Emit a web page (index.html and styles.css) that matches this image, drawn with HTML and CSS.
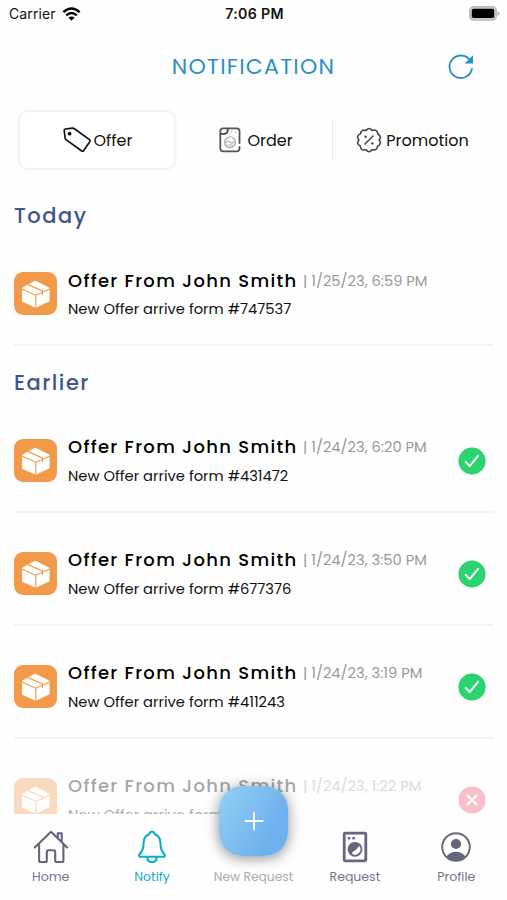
FILE: index.html
```html
<!DOCTYPE html>
<html lang="en">
<head>
    <meta charset="UTF-8">
    <meta name="viewport" content="width=device-width, initial-scale=1.0">
    <title>Notification</title>
    <link rel="stylesheet" href="styles.css">
</head>
<body>
    <!-- Shared icons -->
    <svg class="icon-defs" width="0" height="0">
        <symbol id="box" viewBox="0 0 43 43">
            <path d="M21.2 9 L35.2 16 V29 L21.8 35.4 L8.4 29.4 V16 Z" fill="#fff" stroke="#fff" stroke-width="0.8" stroke-linejoin="round"/>
            <path d="M7.8 17 L21.8 23.2 L36 17 M21.8 23.2 V36 M14 12.6 L28.4 19 V23" fill="none" stroke="#f39a4a" stroke-width="1.2"/>
        </symbol>
        <symbol id="check" viewBox="0 0 28 28">
            <circle cx="14" cy="14" r="13.6" fill="#2bd46f"/>
            <path d="M7.7 14.9 L11.6 19.1 L20.1 8.8" fill="none" stroke="#fff" stroke-width="2" stroke-linecap="round" stroke-linejoin="round"/>
        </symbol>
        <symbol id="cross" viewBox="0 0 28 28">
            <circle cx="14" cy="14" r="13.6" fill="#f0506a"/>
            <path d="M9.7 9.7 L18.3 18.3 M18.3 9.7 L9.7 18.3" fill="none" stroke="#fff" stroke-width="2.2" stroke-linecap="round"/>
        </symbol>
    </svg>

    <div class="screen">
        <div class="status-bar">
            <div class="carrier">
                <span>Carrier</span>
                <svg width="19" height="14" viewBox="0 0 19 14">
                    <path d="M1.4 5.1 Q9.5 -2.1 17.6 5.1" fill="none" stroke="#000" stroke-width="2.5"/>
                    <path d="M4.2 8.3 Q9.5 3.9 14.8 8.3" fill="none" stroke="#000" stroke-width="2.4"/>
                    <path d="M6.4 10.6 Q9.5 8.2 12.6 10.6 L9.5 13.8 Z" fill="#000"/>
                </svg>
            </div>
            <div class="time">7:06 PM</div>
            <div class="battery">
                <svg width="31" height="15" viewBox="0 0 31 15">
                    <rect x="0.7" y="0.7" width="26.6" height="13.4" rx="4" fill="#ccc" stroke="#b8b8b8" stroke-width="1.4"/>
                    <rect x="2.8" y="2.8" width="22.4" height="9.2" rx="1.8" fill="#000"/>
                    <path d="M28.6 5 Q30.6 5.6 30.6 7.4 Q30.6 9.2 28.6 9.8 Z" fill="#b0b0b0"/>
                </svg>
            </div>
        </div>

        <div class="header">
            <h1>NOTIFICATION</h1>
            <svg class="refresh" width="28" height="28" viewBox="0 0 28 28">
                <path d="M24.9 16 A11.3 11.3 0 1 1 22.2 6.2" fill="none" stroke="#2a90c8" stroke-width="1.8" stroke-linecap="round"/>
                <path d="M26 2.2 V10.4 H17.6 Z" fill="#2a90c8"/>
            </svg>
        </div>

        <div class="tabs">
            <div class="tab active">
                <svg width="30" height="28" viewBox="0 0 30 28">
                    <path d="M2.2 4.5 Q2 3.2 3.3 3 L10.3 2.1 Q11.5 2 12.5 2.7 L27.4 13.6 Q28.6 14.6 27.8 15.8 L21.7 24.6 Q20.7 25.7 19.4 24.8 L4.3 13.9 Q3.3 13.1 3.1 11.9 Z" fill="none" stroke="#111" stroke-width="1.7" stroke-linejoin="round"/>
                    <circle cx="7.6" cy="7.7" r="1.9" fill="#111"/>
                </svg>
                <span>Offer</span>
            </div>
            <div class="tab order">
                <svg width="22" height="26" viewBox="0 0 22 26">
                    <path d="M20.5 16 V4 Q20.5 1.3 17.8 1.3 H4 Q1.3 1.3 1.3 4 V21 Q1.3 24.4 4.7 24.4 H17.5 Q20.5 24.4 20.5 21 V20" fill="none" stroke="#555" stroke-width="1.8" stroke-linecap="round"/>
                    <path d="M1.5 6.9 H5.6 Q8.7 6.5 8.7 3.6 V1.5" fill="none" stroke="#444" stroke-width="1.7"/>
                    <path d="M12.2 5 H13.4 M16.2 5 H17.4" stroke="#999" stroke-width="1.2"/>
                    <circle cx="11" cy="15.2" r="5.3" fill="none" stroke="#aaa" stroke-width="1.4"/>
                    <path d="M7 15.8 Q9 13 11 15.2 T15 14.6 M8.4 18 H13.6" fill="none" stroke="#aaa" stroke-width="1.2"/>
                </svg>
                <span>Order</span>
            </div>
            <div class="tab promotion">
                <svg width="26" height="26" viewBox="0 0 26 26">
                    <path d="M13 1.5 Q14.5 1.5 16 3.4 Q19 2.5 20.6 4 Q21.8 5.2 21.9 7 Q24.4 8.5 24.3 10.6 Q24 12 23.1 13 Q25 15.3 24.2 16.7 Q23.4 18.5 21.6 19 Q21.2 22 19.6 22.6 Q18 23.1 16 22.7 Q14.3 24.9 13 24.8 Q11.5 24.8 10 22.7 Q7 23.4 5.5 22.3 Q4.5 21.2 4.3 19 Q1.8 17.9 1.6 15.8 Q1.8 14 2.9 13 Q.9 10.6 1.8 9.1 Q2.6 7.5 4.4 7 Q4.8 4 6.4 3.4 Q8 2.8 10 3.4 Q11.6 1.5 13 1.5 Z" fill="none" stroke="#444" stroke-width="1.6" stroke-linejoin="round"/>
                    <path d="M9 17 L17 9" stroke="#444" stroke-width="1.5" stroke-linecap="round"/>
                    <circle cx="9.6" cy="9.8" r="1.2" fill="#444"/>
                    <circle cx="16.4" cy="16.4" r="1.2" fill="#444"/>
                </svg>
                <span>Promotion</span>
            </div>
        </div>

        <div class="list">
            <h2>Today</h2>
            <div class="item">
                <div class="item-icon"><svg width="43" height="43"><use href="#box"/></svg></div>
                <div class="item-body">
                    <div class="item-title"><span class="name">Offer From John Smith</span><span class="date">| 1/25/23, 6:59 PM</span></div>
                    <div class="item-text">New Offer arrive form #747537</div>
                </div>
            </div>

            <h2>Earlier</h2>
            <div class="item">
                <div class="item-icon"><svg width="43" height="43"><use href="#box"/></svg></div>
                <div class="item-body">
                    <div class="item-title"><span class="name">Offer From John Smith</span><span class="date">| 1/24/23, 6:20 PM</span></div>
                    <div class="item-text">New Offer arrive form #431472</div>
                </div>
                <svg class="state" width="28" height="28"><use href="#check"/></svg>
            </div>
            <div class="item">
                <div class="item-icon"><svg width="43" height="43"><use href="#box"/></svg></div>
                <div class="item-body">
                    <div class="item-title"><span class="name">Offer From John Smith</span><span class="date">| 1/24/23, 3:50 PM</span></div>
                    <div class="item-text">New Offer arrive form #677376</div>
                </div>
                <svg class="state" width="28" height="28"><use href="#check"/></svg>
            </div>
            <div class="item">
                <div class="item-icon"><svg width="43" height="43"><use href="#box"/></svg></div>
                <div class="item-body">
                    <div class="item-title"><span class="name">Offer From John Smith</span><span class="date">| 1/24/23, 3:19 PM</span></div>
                    <div class="item-text">New Offer arrive form #411243</div>
                </div>
                <svg class="state" width="28" height="28"><use href="#check"/></svg>
            </div>
            <div class="item faded">
                <div class="item-icon"><svg width="43" height="43"><use href="#box"/></svg></div>
                <div class="item-body">
                    <div class="item-title"><span class="name">Offer From John Smith</span><span class="date">| 1/24/23, 1:22 PM</span></div>
                    <div class="item-text">New Offer arrive form</div>
                </div>
                <svg class="state" width="28" height="28"><use href="#cross"/></svg>
            </div>
        </div>

        <div class="bottom-nav">
            <div class="nav-item">
                <svg width="36" height="34" viewBox="0 0 36 34">
                    <path d="M1.8 17.4 L17.2 2.4 Q18 1.7 18.8 2.4 L34.2 17.4 M6.1 14.2 V30.4 Q6.1 32 7.7 32 H12.2 Q13.8 32 13.8 30.4 V21.9 Q13.8 20.3 15.4 20.3 H20.6 Q22.2 20.3 22.2 21.9 V30.4 Q22.2 32 23.8 32 H28.8 Q30.4 32 30.4 30.4 V14.2 M24.8 7.6 V3.3 H28.7 V11.4" fill="none" stroke="#65657b" stroke-width="2.1" stroke-linecap="round" stroke-linejoin="round"/>
                </svg>
                <span>Home</span>
            </div>
            <div class="nav-item active">
                <svg width="30" height="34" viewBox="0 0 30 34">
                    <path d="M12.3 4.3 Q12.4 1.7 15 1.7 Q17.6 1.7 17.7 4.3 Q23 6 23.4 12.5 Q23.6 19.8 26 22.5 L27.2 24 Q28 25 27.9 25.7 Q27.7 26.7 26.5 26.7 H3.5 Q2.3 26.7 2.1 25.7 Q2 25 2.8 24 L4 22.5 Q6.4 19.8 6.6 12.5 Q7 6 12.3 4.3 Z M10.3 27 Q10.3 32 15 32 Q19.7 32 19.7 27" fill="none" stroke="#0cadcb" stroke-width="2.1" stroke-linejoin="round"/>
                </svg>
                <span>Notify</span>
            </div>
            <div class="nav-item new-request">
                <div class="add-button">
                    <svg width="20" height="20" viewBox="0 0 20 20">
                        <path d="M10 1.4 V18.6 M1.4 10 H18.6" stroke="#fff" stroke-width="1.8" stroke-linecap="round"/>
                    </svg>
                </div>
                <span>New Request</span>
            </div>
            <div class="nav-item">
                <svg width="26" height="34" viewBox="0 0 26 34">
                    <rect x="2.2" y="3.2" width="21.6" height="27.6" rx="1" fill="none" stroke="#65657b" stroke-width="2.8"/>
                    <rect x="5.8" y="7" width="2.6" height="2.4" fill="#65657b"/>
                    <rect x="10.3" y="7" width="2.6" height="2.4" fill="#65657b"/>
                    <circle cx="13" cy="19.3" r="7.4" fill="#65657b"/>
                    <path d="M17.4 16.1 A5.4 5.4 0 0 1 9.8 23.6 Q11.2 20.8 14 20 Q15 18 17.4 16.1 Z" fill="#fff"/>
                </svg>
                <span>Request</span>
            </div>
            <div class="nav-item">
                <svg width="32" height="34" viewBox="0 0 32 34">
                    <clipPath id="avatar"><circle cx="16" cy="17" r="13.5"/></clipPath>
                    <circle cx="16" cy="17" r="13.8" fill="none" stroke="#65657b" stroke-width="1.9"/>
                    <circle cx="16" cy="14" r="5.1" fill="#65657b"/>
                    <ellipse cx="16" cy="29" rx="10" ry="7.2" fill="#65657b" clip-path="url(#avatar)"/>
                </svg>
                <span>Profile</span>
            </div>
        </div>
    </div>
</body>
</html>
```

FILE: styles.css
```css
body {
    margin: 0;
    background-color: #fefefe;
    color: #111;
    font-family: Poppins, Inter, sans-serif;
}

.icon-defs {
    display: none;
}

.screen {
    display: flex;
    flex-direction: column;
    width: 507px;
    height: 900px;
    overflow: hidden;
}

/* Status bar */
.status-bar {
    display: grid;
    grid-template-columns: 1fr auto 1fr;
    align-items: center;
    height: 27px;
    padding: 0 7px 0 9px;
    box-sizing: border-box;
    font-family: Inter, sans-serif;
    font-size: 14px;
}

.carrier {
    display: flex;
    align-items: center;
    gap: 6px;
    letter-spacing: 0.1px;
}

.time {
    font-size: 14.2px;
    font-weight: 600;
    letter-spacing: 0.3px;
}

.battery {
    display: flex;
    justify-content: flex-end;
}

/* Header */
.header {
    display: grid;
    grid-template-columns: 1fr auto 1fr;
    align-items: center;
    height: 78px;
    padding: 0 32px;
}

.header h1 {
    grid-column: 2;
    margin: 0;
    color: #2a90c8;
    font-size: 22px;
    font-weight: 400;
    letter-spacing: 1.25px;
}

.refresh {
    margin-top: 1px;
    justify-self: end;
}

/* Tabs */
.tabs {
    display: grid;
    grid-template-columns: 154px 159px 1fr;
    height: 56px;
    margin: 7px 15px 0 20px;
    font-size: 16px;
}

.tab {
    display: flex;
    align-items: center;
    justify-content: center;
    gap: 2px;
    box-sizing: border-box;
}

.tab.active {
    background-color: #fff;
    border-radius: 8px;
    box-shadow: 0 0 4px rgba(0, 0, 0, 0.14);
}

.tab.order {
    gap: 6px;
    margin: 8px 0;
    padding-left: 6px;
    border-right: 1.5px solid #e8e8e8;
}

.tab.promotion {
    gap: 4px;
}

/* Notifications */
.list {
    flex: none;
    height: 646px;
    padding: 11px 13px 0 14px;
    box-sizing: border-box;
    overflow: hidden;
}

.list h2 {
    margin: 0;
    padding-top: 20px;
    color: #40558a;
    font-size: 21px;
    font-weight: 500;
    line-height: 34px;
    letter-spacing: 1.5px;
}

.item {
    display: flex;
    height: 112.9px;
    padding: 28px 8px 0 0;
    border-bottom: 2px solid #f3f3f3;
    box-sizing: border-box;
}

.item-icon {
    width: 43px;
    height: 43px;
    margin: 11px 11px 0 0;
    background-color: #f39a4a;
    border-radius: 9px;
}

.item-icon svg {
    display: block;
}

.item-body {
    flex: 1;
    white-space: nowrap;
}

.item-title {
    display: flex;
    align-items: center;
    height: 38px;
}

.name {
    width: 235px;
    color: #000;
    font-size: 18px;
    font-weight: 500;
    letter-spacing: 1.3px;
}

.date {
    padding-top: 2px;
    color: #999;
    font-size: 14.7px;
}

.item-text {
    height: 20px;
    font-size: 14.7px;
    line-height: 21px;
}

.state {
    margin-top: 19px;
}

.faded {
    opacity: 0.35;
}

/* Bottom navigation */
.bottom-nav {
    position: relative;
    display: grid;
    grid-template-columns: repeat(5, 1fr);
    flex: none;
    height: 86px;
    background-color: #fefefe;
}

.nav-item {
    display: flex;
    flex-direction: column;
    align-items: center;
    padding-top: 16px;
    color: #75758a;
    font-size: 12.5px;
    line-height: 18px;
    white-space: nowrap;
}

.nav-item span {
    margin-top: 4px;
}

.nav-item.active {
    color: #0cadcb;
}

.nav-item.new-request {
    padding-top: 50px;
    color: #aaa;
    font-size: 12.3px;
}

.add-button {
    position: absolute;
    top: -28px;
    left: 219px;
    display: flex;
    align-items: center;
    justify-content: center;
    width: 69px;
    height: 70px;
    background: linear-gradient(120deg, #92d0f3, #6eb0ee 75%);
    border-radius: 23px;
    box-shadow: 0 2px 14px rgba(0, 0, 0, 0.45);
}
```
